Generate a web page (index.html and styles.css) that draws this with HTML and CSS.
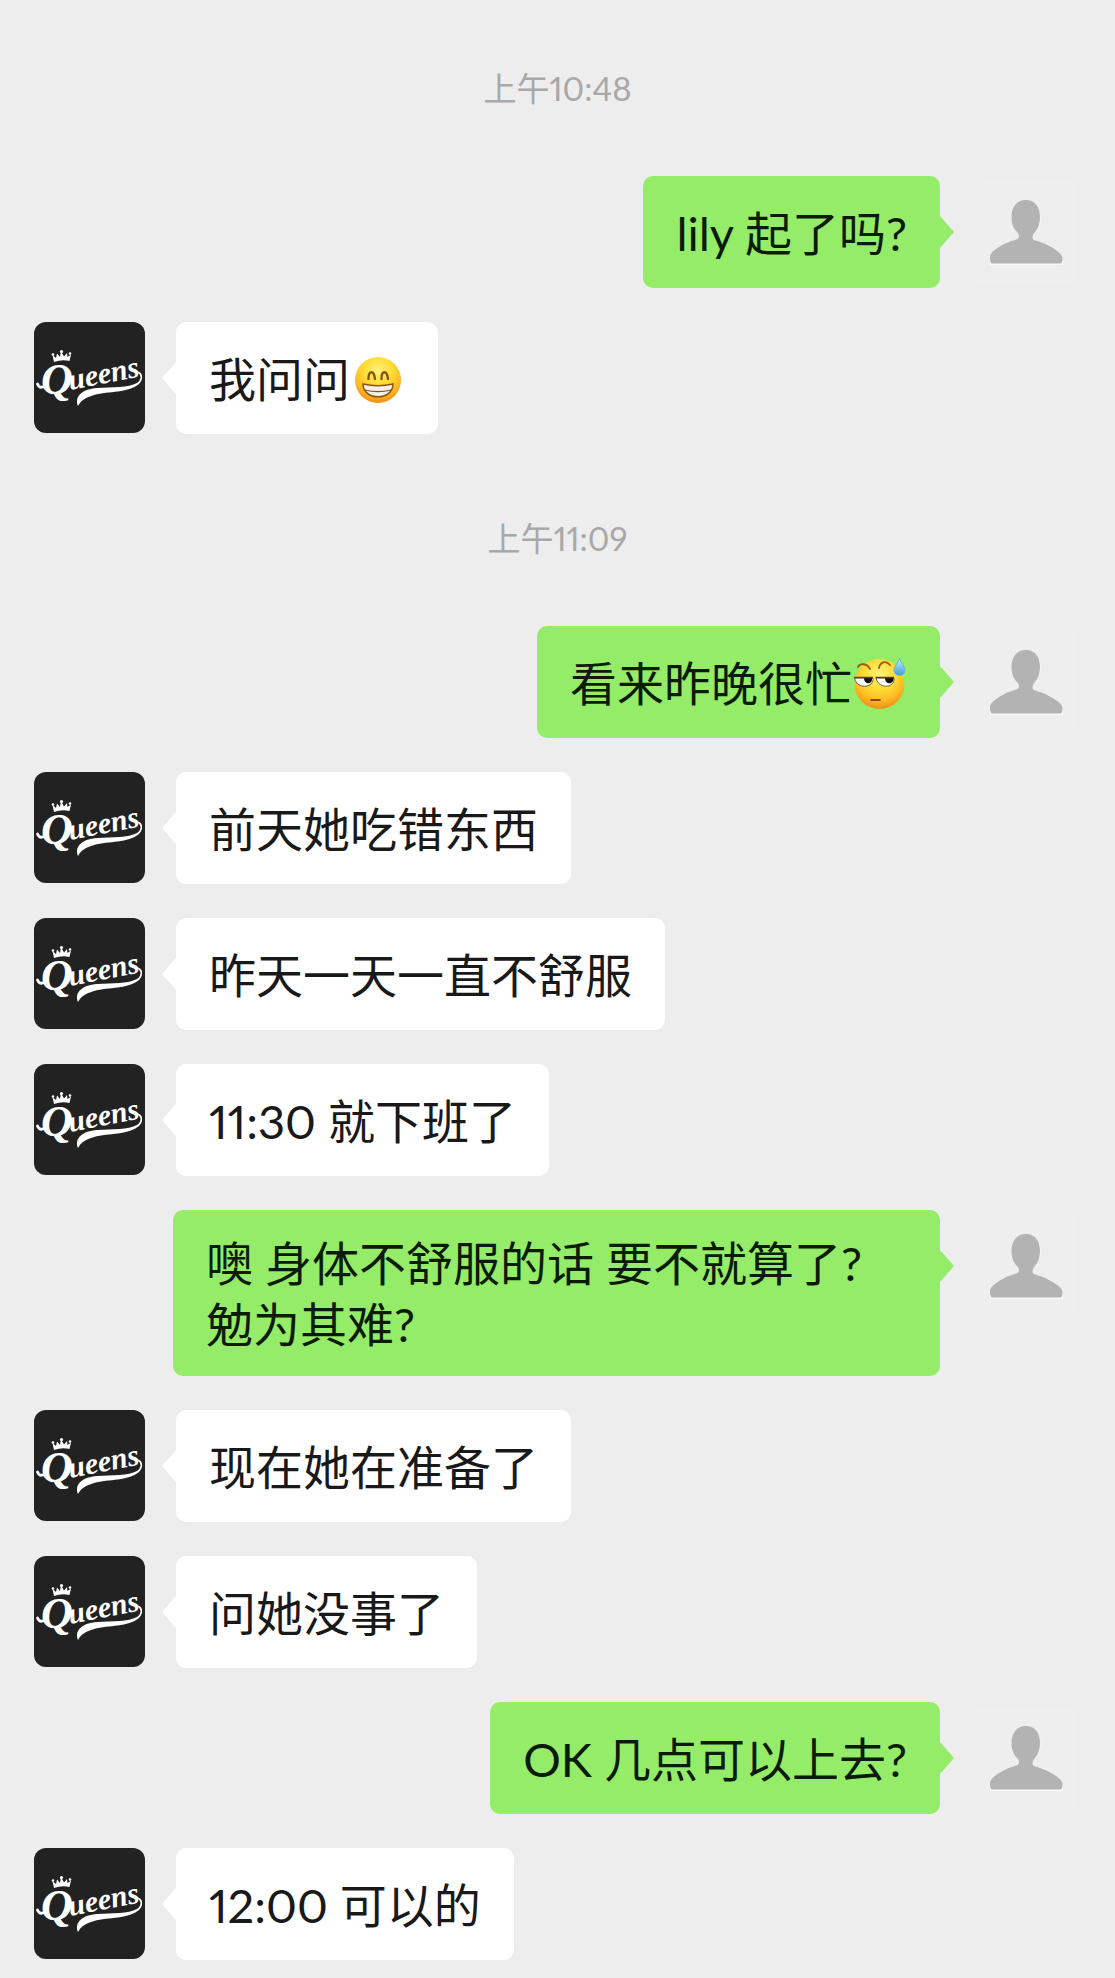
FILE: index.html
```html
<!DOCTYPE html>
<html lang="zh-CN">
<head>
<meta charset="utf-8">
<meta name="viewport" content="width=device-width, initial-scale=1">
<title>聊天</title>
<link rel="stylesheet" href="styles.css">
</head>
<body>
<svg class="defs" aria-hidden="true">
  <defs>
    <symbol id="queens" viewBox="0 0 111 111">
      <rect width="111" height="111" fill="#222"/>
      <g fill="#fff">
        <path d="M20 40 L18.500 33 L22 36 L23 31.500 L26 35 L27 29 L30 34.500 L33 31 L33.500 35 L37 32.500 L35.500 39 Q28 37 20 40Z"/>
        <circle cx="19" cy="32.500" r="1.300"/><circle cx="27.500" cy="29.500" r="1.600"/><circle cx="36" cy="31.500" r="1.300"/>
        <text class="logo-initial" x="7" y="72">Q</text>
        <text class="logo-rest" x="36" y="68" transform="rotate(-11 36 68)">ueens</text>
        <path d="M44 84 C40 74 49 67 63 66 C79 65 94 66 103 61 C109 57 107 50 100 50 C108 47 111 56 105 62 C94 71 75 69 60 73 C50 76 47 79 44 84Z"/>
      </g>
      <path d="M13 61 C9 67 5 66 3.500 62" fill="none" stroke="#fff" stroke-width="2.800" stroke-linecap="round"/>
    </symbol>
    <symbol id="person" viewBox="0 0 111 111">
      <rect x="5" y="5" width="101" height="103" rx="8" fill="#eee"/>
      <path d="M20 89 V83 C20 76 35 67 46 64.500 C50 63.500 50 59 47 56 C43 52 41.500 47 41.500 42 C41.500 32 47 25 56 25 C65 25 70.500 32 70.500 42 C70.500 47 69 52 65 56 C62 59 62 63.500 66 64.500 C77 67 93 76 93 83 V89Z" fill="#fafafa"/>
      <path d="M21.500 87.500 C20 86 20 83 20 81 C20 75 35 66.500 45 64 C50 63 50 59 47 56 C43 52 41.500 47 41.500 41 C41.500 31 47 24 56 24 C65 24 70 31 70 41 C70 47 68.500 52 65 56 C62 59 62 63 64 64 C76 67 92.500 76 92.500 82 C92.500 84 92.500 86 91 87.500Z" fill="#b3b3b3"/>
    </symbol>
    <radialGradient id="face" cx="50%" cy="30%" r="70%">
      <stop offset="0" stop-color="#fff27a"/><stop offset=".45" stop-color="#ffdc33"/><stop offset=".75" stop-color="#fdba25"/><stop offset="1" stop-color="#f08f10"/>
    </radialGradient>
    <linearGradient id="drop" x2="0" y2="1">
      <stop offset="0" stop-color="#d5f1ff"/><stop offset="1" stop-color="#3a9fe0"/>
    </linearGradient>
  </defs>
</svg>

<main class="chat">
  <time class="stamp">上午10:48</time>

  <article class="message mine">
    <svg class="avatar" role="img" aria-label="我"><use href="#person"/></svg>
    <p class="bubble">lily 起了吗?</p>
  </article>
  <article class="message">
    <svg class="avatar" role="img" aria-label="Queens"><use href="#queens"/></svg>
    <p class="bubble">我问问<svg class="emoji" viewBox="0 0 55 55" role="img" aria-label="呲牙">
      <circle cx="28" cy="28" r="23" fill="url(#face)"/>
      <path d="M18.500 27 C18.500 18 24 18 25 27 M31.500 27 C31.500 18 37 18 38 27" fill="none" stroke="#8a5310" stroke-width="2.400" stroke-linecap="round"/>
      <path d="M13 32 C22 34 34 34 43 32 C43 49 13 49 13 32Z" fill="#f3efeb" stroke="#8a5310" stroke-width="1.500"/>
      <path d="M15 38 C23 40 33 40 41 38" fill="none" stroke="#8a5310" stroke-width="1.200"/>
    </svg></p>
  </article>

  <time class="stamp">上午11:09</time>

  <article class="message mine">
    <svg class="avatar" role="img" aria-label="我"><use href="#person"/></svg>
    <p class="bubble">看来昨晚很忙<svg class="emoji" viewBox="0 0 55 55" role="img" aria-label="汗">
      <circle cx="27.500" cy="28" r="25" fill="url(#face)"/>
      <path d="M6 11 C8 7 15 7 18 13 M27 12 C28 6 34 4 38 9" fill="none" stroke="#9b5a12" stroke-width="1.800" stroke-linecap="round"/>
      <path d="M2.500 22 H21 C22 33 4 33 2.500 22Z M24 22 H42 C43 33 26 33 24 22Z" fill="#fff" stroke="#7a5a2c" stroke-width="1"/>
      <path d="M12 22 H20 C21 29 12 29 12 22Z M33 22 H41.500 C42 29 33 29 33 22Z" fill="#111"/>
      <path d="M2 21.500 H21 M23.500 21.500 H42" stroke="#5b4218" stroke-width="1.600"/>
      <path d="M19 44 H28" stroke="#8a4b10" stroke-width="1.800" stroke-linecap="round"/>
      <path d="M47.500 2 C49 8 53 10 53 14 C53 21 42 21 42 14 C42 10 46 8 47.500 2Z" fill="url(#drop)" stroke="#5fb2e2" stroke-width="1"/>
    </svg></p>
  </article>
  <article class="message">
    <svg class="avatar" role="img" aria-label="Queens"><use href="#queens"/></svg>
    <p class="bubble">前天她吃错东西</p>
  </article>
  <article class="message">
    <svg class="avatar" role="img" aria-label="Queens"><use href="#queens"/></svg>
    <p class="bubble">昨天一天一直不舒服</p>
  </article>
  <article class="message">
    <svg class="avatar" role="img" aria-label="Queens"><use href="#queens"/></svg>
    <p class="bubble">11:30 就下班了</p>
  </article>
  <article class="message mine">
    <svg class="avatar" role="img" aria-label="我"><use href="#person"/></svg>
    <p class="bubble">噢 身体不舒服的话 要不就算了?勉为其难?</p>
  </article>
  <article class="message">
    <svg class="avatar" role="img" aria-label="Queens"><use href="#queens"/></svg>
    <p class="bubble">现在她在准备了</p>
  </article>
  <article class="message">
    <svg class="avatar" role="img" aria-label="Queens"><use href="#queens"/></svg>
    <p class="bubble">问她没事了</p>
  </article>
  <article class="message mine">
    <svg class="avatar" role="img" aria-label="我"><use href="#person"/></svg>
    <p class="bubble">OK 几点可以上去?</p>
  </article>
  <article class="message">
    <svg class="avatar" role="img" aria-label="Queens"><use href="#queens"/></svg>
    <p class="bubble">12:00 可以的</p>
  </article>
</main>
</body>
</html>
```
FILE: styles.css
```css
* {
  box-sizing: border-box;
}

body {
  margin: 0;
  background: #ededed;
  color: #191919;
  font-family: Lato, "Noto Sans CJK SC", sans-serif;
  font-weight: 400;
  font-variant-numeric: proportional-nums;
}

.defs {
  position: absolute;
  width: 0;
  height: 0;
}

.chat {
  display: flex;
  flex-direction: column;
  gap: 34px;
  padding: 18px 34px;
}

.stamp {
  padding: 48px 0 32px;
  color: #a8a8a8;
  font-size: 33px;
  line-height: 44px;
  text-align: center;
}

.message {
  display: flex;
  align-items: flex-start;
  gap: 31px;
  padding-right: 139px;
}

.mine {
  flex-direction: row-reverse;
  gap: 30px;
  padding-right: 0;
  padding-left: 139px;
}

.avatar {
  flex: none;
  width: 111px;
  height: 111px;
  border-radius: 12px;
}

.bubble {
  --fill: #fff;
  position: relative;
  display: flex;
  align-items: center;
  min-height: 112px;
  margin: 0;
  padding: 23px 33px 21px;
  border-radius: 10px;
  background: var(--fill);
  font-size: 47px;
  line-height: 61px;
}

.mine .bubble {
  --fill: #95ec69;
  color: #0b1b04;
}

.bubble::before {
  content: "";
  position: absolute;
  top: 40px;
  right: 100%;
  width: 14px;
  height: 32px;
  background: var(--fill);
  clip-path: polygon(100% 0, 0 50%, 100% 100%);
}

.mine .bubble::before {
  right: auto;
  left: 100%;
  clip-path: polygon(0 0, 100% 50%, 0 100%);
}

.emoji {
  flex: none;
  width: 55px;
  height: 55px;
}

.logo-initial,
.logo-rest {
  font-family: "Liberation Serif", serif;
  font-style: italic;
  font-weight: 700;
}

.logo-initial {
  font-size: 44px;
}

.logo-rest {
  font-size: 30px;
}
```
